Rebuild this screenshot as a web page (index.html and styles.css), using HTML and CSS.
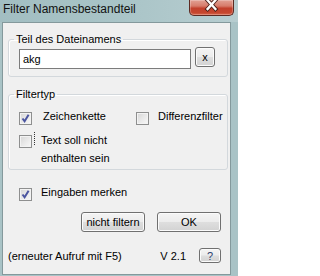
FILE: index.html
```html
<!DOCTYPE html>
<html>
<head>
<meta charset="utf-8">
<link rel="stylesheet" href="styles.css">
</head>
<body>
<div class="window">
  <div class="titlebar">
    <span class="title">Filter Namensbestandteil</span>
    <div class="close">
      <svg width="45" height="16" viewBox="0 0 45 16">
        <path d="M19 0 L27 9 M27 0 L19 9" stroke="#4a1f18" stroke-width="4.2" stroke-linecap="square" fill="none"/>
        <path d="M19 0 L27 9 M27 0 L19 9" stroke="#ffffff" stroke-width="2.4" stroke-linecap="square" fill="none"/>
      </svg>
    </div>
  </div>
  <div class="client">
    <fieldset class="group g1">
      <legend>Teil des Dateinamens</legend>
      <div class="inputrow">
        <div class="textbox">akg</div>
        <button class="btn btn-x">x</button>
      </div>
    </fieldset>
    <fieldset class="group g2">
      <legend>Filtertyp</legend>
      <div class="opts">
        <div class="optrow">
          <label class="chk c-zeichen"><span class="box"><svg width="11" height="11" viewBox="0 0 11 11"><path d="M2.5 5.5 L4.6 8.3 L8.6 1.8" stroke="#4b55a0" stroke-width="2" fill="none"/></svg></span><span class="lbl">Zeichenkette</span></label>
          <label class="chk c-diff"><span class="box"></span><span class="lbl">Differenzfilter</span></label>
        </div>
        <div class="optrow row2">
          <label class="chk c-text"><span class="box"></span><span class="focus"></span><span class="lbl multi">Text soll nicht<br>enthalten sein</span></label>
        </div>
      </div>
    </fieldset>
    <label class="chk c-merken"><span class="box"><svg width="11" height="11" viewBox="0 0 11 11"><path d="M2.5 5.5 L4.6 8.3 L8.6 1.8" stroke="#4b55a0" stroke-width="2" fill="none"/></svg></span><span class="lbl">Eingaben merken</span></label>
    <div class="btnrow">
      <button class="btn btn-wide">nicht filtern</button>
      <button class="btn btn-wide">OK</button>
    </div>
    <div class="footer">
      <span class="hint">(erneuter Aufruf mit F5)</span>
      <span class="ver">V 2.1</span>
      <button class="btn btn-help">?</button>
    </div>
  </div>
</div>
</body>
</html>
```

FILE: styles.css
```css
html, body {
  margin: 0;
  padding: 0;
}
body {
  width: 238px;
  height: 276px;
  overflow: hidden;
  font-family: "Liberation Sans", Arial, sans-serif;
  font-size: 11px;
  color: #000;
}
.window {
  width: 238px;
  height: 276px;
  display: flex;
  flex-direction: column;
  background: #a9c3c6;
  box-sizing: border-box;
  overflow: hidden;
}
.titlebar {
  height: 22px;
  flex: none;
  display: flex;
  align-items: flex-start;
  justify-content: space-between;
  background: linear-gradient(90deg, #a2bec2 0%, #a9c4c7 50%, #b7cdd0 100%);
}
.title {
  font-size: 12px;
  line-height: 14px;
  padding: 2px 0 0 3px;
  color: #111;
}
.close {
  width: 45px;
  height: 16px;
  margin-right: 4px;
  box-sizing: border-box;
  border: 1px solid #5d2a22;
  border-top: none;
  border-radius: 0 0 5px 5px;
  background: linear-gradient(180deg, #e2a194 0%, #d77c6b 40%, #c2402c 55%, #c6472f 85%, #d86a4f 100%);
  box-shadow: inset 0 0 0 1px rgba(255,255,255,0.25);
  display: flex;
}
.close svg {
  margin-left: -1px;
}
.client {
  flex: 1;
  min-width: 0;
  margin: 0 7px 1px 2px;
  border: 1px solid #84999c;
  background: #f0f0f0;
  padding: 10px 2px 0 5px;
  display: flex;
  flex-direction: column;
}
.group {
  margin: 0;
  min-width: 0;
  border: 1px solid #d3d8dc;
  border-radius: 3px;
  padding: 0 0 0 5px;
  box-shadow: inset 1px 1px 0 #fff;
}
.group legend {
  padding: 0 2px;
  line-height: 13px;
}
.g1 {
  padding-top: 1px;
  padding-bottom: 7px;
}
.inputrow {
  display: flex;
  align-items: flex-start;
  margin-left: 5px;
}
.textbox {
  width: 172px;
  height: 20px;
  box-sizing: border-box;
  margin-top: 2px;
  border: 1px solid #7c7c7c;
  background: #fff;
  padding: 0 0 0 3px;
  line-height: 18px;
  font-size: 11px;
}
.btn {
  font-family: "Liberation Sans", Arial, sans-serif;
  font-size: 11px;
  color: #000;
  box-sizing: border-box;
  border: 1px solid #707070;
  border-radius: 3px;
  background: linear-gradient(180deg, #f4f4f4 0%, #ececec 48%, #dedede 52%, #d2d2d2 100%);
  box-shadow: inset 0 0 0 1px #fbfbfb;
  padding: 0;
  margin: 0;
  line-height: 17px;
  text-align: center;
}
.btn-x {
  width: 20px;
  height: 20px;
  margin-left: 4px;
  line-height: 16px;
}
.g2 {
  margin-top: 11px;
  padding-top: 7px;
  padding-bottom: 2px;
}
.opts {
  margin-left: 5px;
  display: flex;
  flex-direction: column;
  gap: 6px;
}
.optrow {
  display: flex;
  align-items: flex-start;
}
.chk {
  display: flex;
  align-items: flex-start;
  line-height: 17px;
}
.box {
  width: 13px;
  height: 13px;
  box-sizing: border-box;
  margin-top: 4px;
  border: 1px solid #8e8f8f;
  background: linear-gradient(135deg, #d6d6d6 0%, #eaeaea 55%, #f8f8f8 100%);
  box-shadow: inset 0 0 0 1px #f3f3f3;
  display: flex;
  align-items: center;
  justify-content: center;
  flex: none;
}
.box svg {
  display: block;
}
.c-zeichen {
  width: 117px;
  flex: none;
}
.c-zeichen .lbl {
  margin-left: 11px;
}
.c-diff .lbl {
  margin-left: 9px;
}
.row2 .chk {
  line-height: 18px;
}
.focus {
  width: 0;
  height: 13px;
  margin-top: 1px;
  margin-left: 2px;
  border-left: 1px dotted #333;
}
.c-text .lbl {
  margin-left: 6px;
}
.c-merken {
  margin: 14px 0 0 11px;
}
.c-merken .lbl {
  margin-left: 9px;
}
.btnrow {
  display: flex;
  justify-content: flex-end;
  gap: 12px;
  margin-top: 11px;
  padding-right: 7px;
}
.btn-wide {
  width: 64px;
  height: 20px;
}
.footer {
  display: flex;
  align-items: center;
  margin-top: 16px;
  padding-right: 7px;
}
.hint {
  line-height: 14px;
}
.ver {
  margin-left: auto;
  line-height: 14px;
}
.btn-help {
  width: 22px;
  height: 15px;
  margin-left: 13px;
  line-height: 12px;
  color: #2d3f6e;
}
```
